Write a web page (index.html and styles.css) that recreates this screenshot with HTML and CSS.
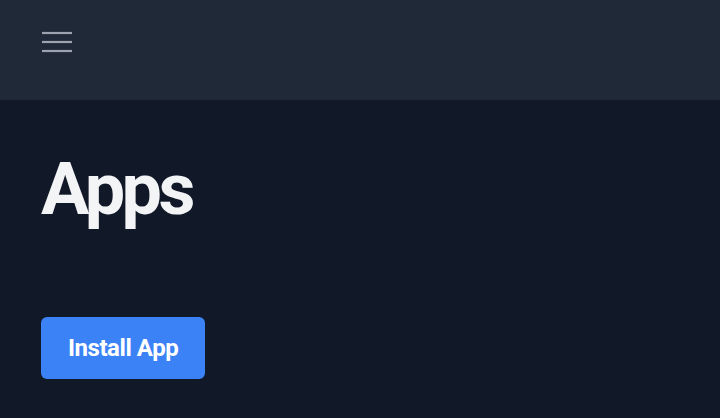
FILE: index.html
```html
<!DOCTYPE html>
<html>
<head>
<meta charset="utf-8">
<link rel="stylesheet" href="styles.css">
</head>
<body>
<header class="topbar">
  <button class="menu" aria-label="Menu">
    <svg width="30" height="24" viewBox="0 0 30 24"><g stroke="#9ca3af" stroke-width="2.2"><line x1="0" y1="3" x2="30" y2="3"/><line x1="0" y1="12" x2="30" y2="12"/><line x1="0" y1="21" x2="30" y2="21"/></g></svg>
  </button>
</header>
<main class="content">
  <h1 class="title">Apps</h1>
  <button class="install">Install App</button>
</main>
</body>
</html>
```
FILE: styles.css
```css
html, body { margin: 0; padding: 0; }
body {
  background: #111827;
  font-family: Roboto, "Liberation Sans", sans-serif;
  width: 720px;
  height: 418px;
  overflow: hidden;
}
.topbar {
  height: 100px;
  background: #1f2937;
  display: flex;
  align-items: flex-start;
  padding: 30px 0 0 42px;
  box-sizing: border-box;
}
.menu {
  background: none;
  border: 0;
  padding: 0;
  display: flex;
}
.content {
  padding: 54px 41px 0;
  display: flex;
  flex-direction: column;
  align-items: flex-start;
}
.title {
  margin: 0;
  font-size: 72px;
  line-height: 72px;
  font-weight: 700;
  color: #f3f4f6;
  letter-spacing: -0.05em;
}
.install {
  margin-top: 91px;
  background: #3b82f6;
  color: #fff;
  border: 0;
  border-radius: 6px;
  font-family: Roboto, "Liberation Sans", sans-serif;
  font-size: 24px;
  font-weight: 700;
  line-height: 32px;
  letter-spacing: -0.45px;
  padding: 15px 27px;
}
```
